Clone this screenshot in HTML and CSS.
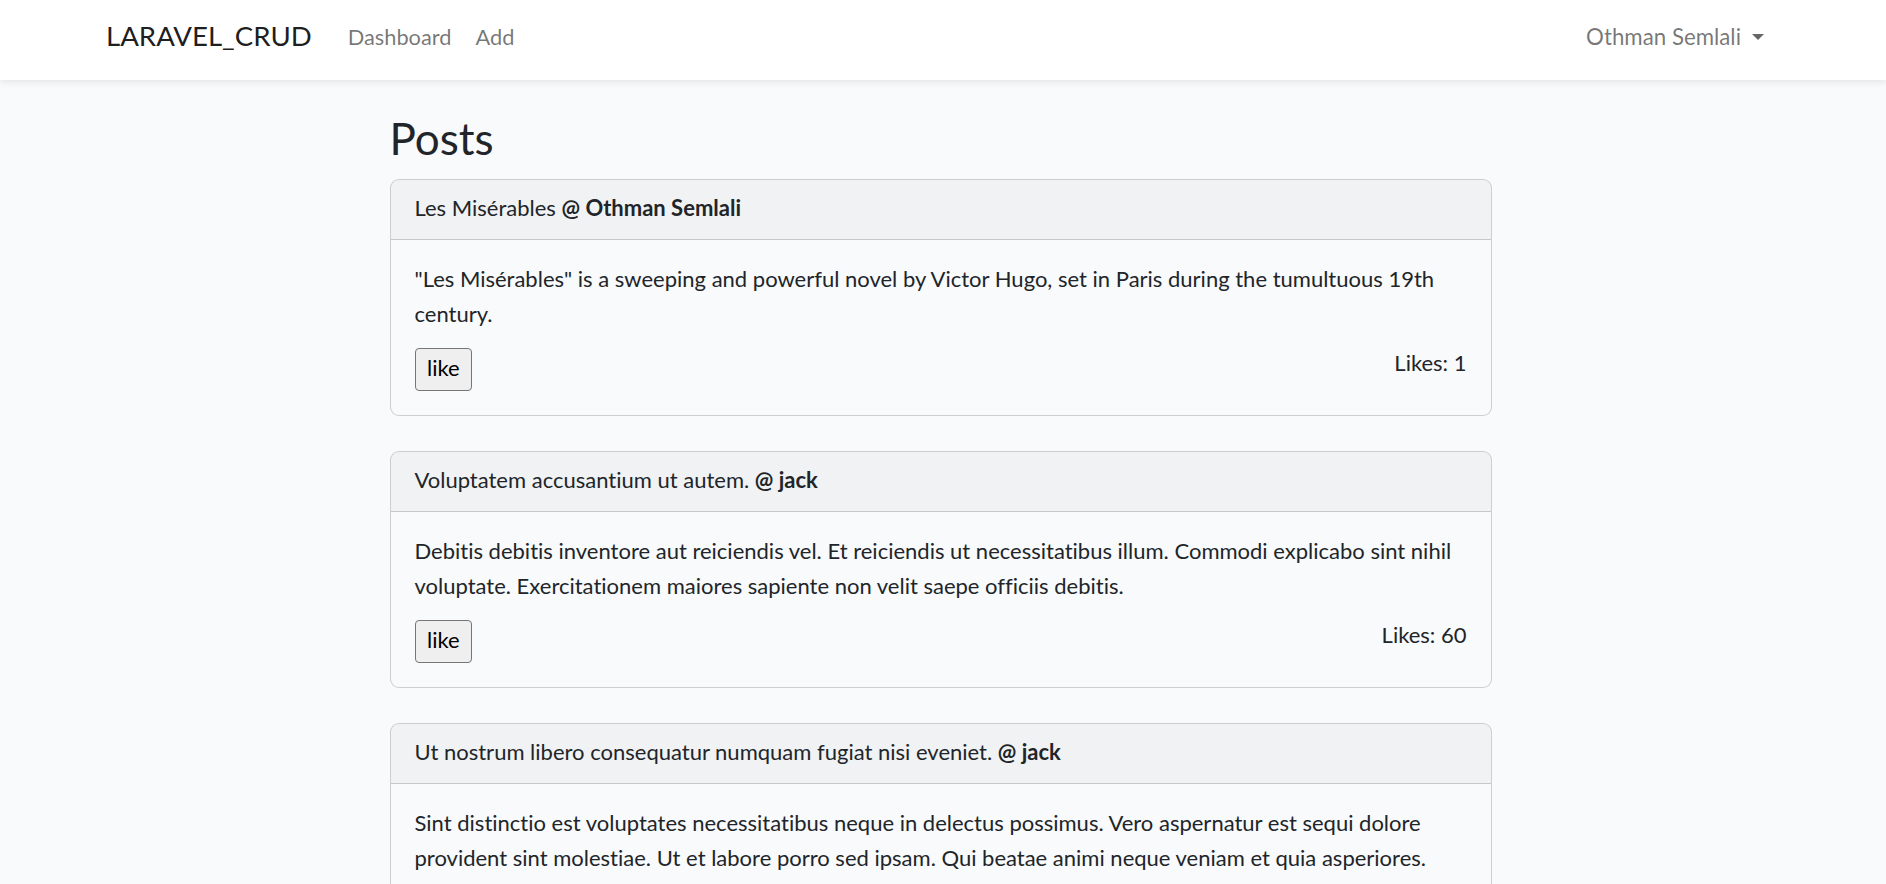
FILE: index.html
```html
<!DOCTYPE html>
<html lang="en">
<head>
<meta charset="utf-8">
<title>LARAVEL_CRUD</title>
<link rel="stylesheet" href="styles.css">
</head>
<body>
<nav class="navbar">
  <div class="nav-container">
    <a class="brand" href="#">LARAVEL_CRUD</a>
    <ul class="nav-links">
      <li><a class="nav-link" href="#">Dashboard</a></li>
      <li><a class="nav-link" href="#">Add</a></li>
    </ul>
    <div class="nav-user">
      <a class="nav-link dropdown-toggle" href="#">Othman Semlali<span class="caret"></span></a>
    </div>
  </div>
</nav>

<main class="main">
  <div class="column">
    <h2 class="page-title">Posts</h2>

    <div class="card">
      <div class="card-header">Les Misérables <strong>@ Othman Semlali</strong></div>
      <div class="card-body">
        <p class="card-text">"Les Misérables" is a sweeping and powerful novel by Victor Hugo, set in Paris during the tumultuous 19th century.</p>
        <div class="card-actions">
          <button class="like-btn" type="button">like</button>
          <div class="likes">Likes: 1</div>
        </div>
      </div>
    </div>

    <div class="card">
      <div class="card-header">Voluptatem accusantium ut autem. <strong>@ jack</strong></div>
      <div class="card-body">
        <p class="card-text">Debitis debitis inventore aut reiciendis vel. Et reiciendis ut necessitatibus illum. Commodi explicabo sint nihil voluptate. Exercitationem maiores sapiente non velit saepe officiis debitis.</p>
        <div class="card-actions">
          <button class="like-btn" type="button">like</button>
          <div class="likes">Likes: 60</div>
        </div>
      </div>
    </div>

    <div class="card">
      <div class="card-header">Ut nostrum libero consequatur numquam fugiat nisi eveniet. <strong>@ jack</strong></div>
      <div class="card-body">
        <p class="card-text">Sint distinctio est voluptates necessitatibus neque in delectus possimus. Vero aspernatur est sequi dolore provident sint molestiae. Ut et labore porro sed ipsam. Qui beatae animi neque veniam et quia asperiores.</p>
      </div>
    </div>
  </div>
</main>
</body>
</html>
```
FILE: styles.css
```css
html {
  overflow: hidden;
}

body {
  margin: 0;
  background: #f8fafc;
  color: #212529;
  font-family: "Lato", "Liberation Sans", sans-serif;
  font-size: 22px;
  line-height: 34.56px;
  font-variant-ligatures: no-common-ligatures;
}

a {
  text-decoration: none;
}

/* ---------- navbar ---------- */
.navbar {
  background: #ffffff;
  box-shadow: 0 3px 6px rgba(0, 0, 0, 0.075);
  height: 80px;
  box-sizing: border-box;
  padding-bottom: 4px;
  position: relative;
  z-index: 1;
}

.nav-container {
  width: 1710px;
  margin: 0 auto;
  padding: 0 18px;
  box-sizing: border-box;
  height: 100%;
  display: flex;
  align-items: center;
}

.brand {
  color: rgba(0, 0, 0, 0.9);
  font-size: 27.6px;
  line-height: 40px;
  padding-bottom: 4px;
  margin-right: 24px;
}

.nav-links {
  list-style: none;
  margin: 0;
  padding: 0;
  display: flex;
}

.nav-link {
  display: block;
  color: rgba(0, 0, 0, 0.55);
  font-size: 21.8px;
  padding: 0 12px;
  line-height: 34.56px;
  padding-bottom: 2px;
}

.nav-user {
  margin-left: auto;
}

.dropdown-toggle {
  display: flex;
  align-items: center;
  font-size: 22.3px;
  padding-right: 16px;
}

.caret {
  display: inline-block;
  width: 0;
  height: 0;
  margin-left: 11px;
  border-top: 6.5px solid rgba(0, 0, 0, 0.6);
  border-left: 6.5px solid transparent;
  border-right: 6.5px solid transparent;
}

/* ---------- content ---------- */
.main {
  padding-top: 33px;
}

.column {
  width: 1102px;
  margin: 0 auto;
  padding-right: 5px;
}

.page-title {
  margin: 0 0 14.4px;
  font-size: 44px;
  font-weight: 400;
  line-height: 51.6px;
  color: #212529;
}

.card {
  border: 1px solid rgba(0, 0, 0, 0.175);
  border-radius: 9px;
  background: #f8fafc;
  margin-bottom: 35px;
  overflow: hidden;
}

.card-header {
  background: rgba(0, 0, 0, 0.03);
  border-bottom: 1px solid rgba(0, 0, 0, 0.175);
  padding: 10.7px 24px 13.3px;
}

.card-header strong {
  font-weight: 700;
}

.card-body {
  padding: 22.5px 24px 24px;
}

.card-text {
  margin: 0 0 16.4px;
}

.card-actions {
  display: flex;
  justify-content: space-between;
  align-items: flex-start;
}

.like-btn {
  font-family: inherit;
  font-size: inherit;
  line-height: 34.56px;
  color: #000000;
  background: #efefef;
  border: 1px solid #767676;
  border-radius: 4px;
  padding: 2px 11.5px 5px;
  margin: 0;
}

.likes {
  line-height: 30px;
}
```
